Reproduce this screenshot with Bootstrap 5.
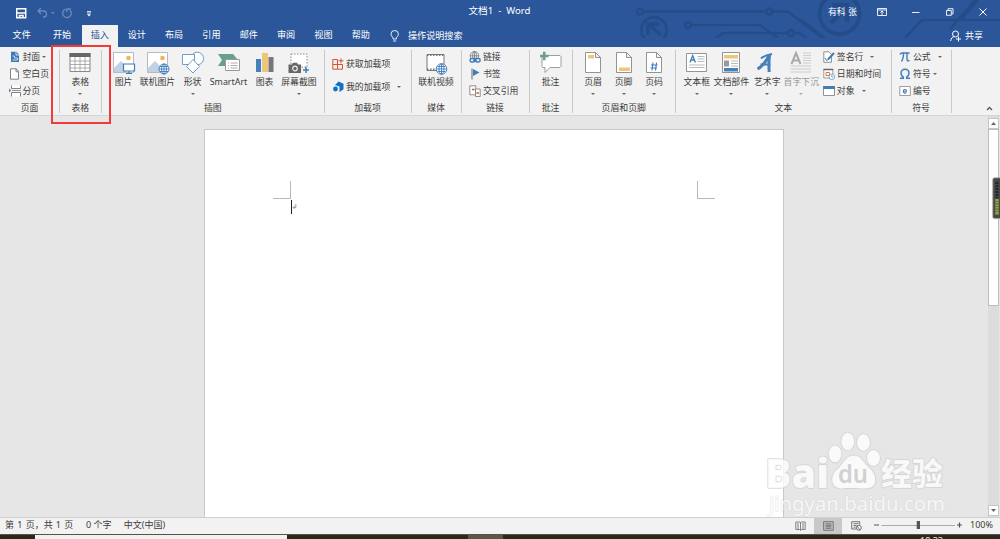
<!DOCTYPE html>
<html lang="zh-CN">
<head>
<meta charset="utf-8">
<meta name="viewport" content="width=device-width, initial-scale=1">
<title>文档1 - Word</title>
<link href="https://cdn.jsdelivr.net/npm/bootstrap@5.3.0/dist/css/bootstrap.min.css" rel="stylesheet">
<style>
  :root { --blue:#2b579a; --ink:#3c3c3c; --line:#c9c9c9; }
  body { font-family:"Noto Sans","Noto Sans CJK SC",sans-serif; font-size:8.9px; line-height:14px; color:var(--ink); background:#e6e6e6; width:1000px; height:539px; }
  svg { display:block; flex:none; }
  svg:not([fill]) { fill:none; }
  .titlebar { height:47px; background:var(--blue); color:#fff; }
  .art { left:630px; top:0; }
  .caption-row { height:25px; }
  .quick { width:450px; padding-left:16px; }
  .doc-name { width:99px; font-size:9.6px; padding-bottom:3px; text-align:center; }
  .win { padding-left:279px; padding-bottom:2px; }
  .win-buttons { margin-left:19px; }
  .tabs-row { height:22px; }
  .tab { width:37.35px; height:22px; line-height:20px; text-align:center; color:#fff; text-decoration:none; font-size:9.1px; }
  .tab-file { width:43.4px; }
  .tab.active { background:#f2f2f2; color:var(--blue); width:36px; margin:0 .35px 0 1px; }
  .tell { margin-left:10px; margin-bottom:1px; gap:5.500px; font-size:9.1px; }
  .share { margin-right:17px; margin-bottom:1px; font-size:9px; }
  .ribbon { height:69px; background:#f2f2f2; border-bottom:1px solid #d6d6d6; }
  .grp { height:69px; padding-top:4px; }
  .grp::after { content:""; position:absolute; right:-.5px; top:3px; height:63px; width:1px; background:var(--line); }
  .grp-body { height:50px; }
  .big { height:50px; padding:0; border:0; background:none; color:inherit; }
  .big .cap { height:14px; white-space:nowrap; }
  .arrow { width:0; height:0; border:2px solid transparent; border-top:2.4px solid #666; border-bottom:0; flex:none; }
  .big .arrow { margin-top:4px; }
  .small-row { height:16.8px; gap:2px; white-space:nowrap; }
  .small-row .arrow { margin-left:5px; }
  .small-row .arrow-near { margin-left:0; }
  .stack { padding-top:.01px; }
  .grp-body { display:flow-root; }
  .stack .small-row:first-child { margin-top:-2px; }
  .g1 { width:59px; } .g1 .stack { padding-left:8.500px; }
  .g2 { width:42.5px; } .g3 { width:222.5px; } .g4 { width:87px; } .g5 { width:50px; }
  .g6 { width:68px; } .g7 { width:43px; } .g8 { width:103.5px; } .g9 { width:215.5px; } .g10 { width:60px; }
  .cols { display:grid; }
  .g3 .cols { grid-template-columns:22px 46px 24px 48px 24px 45px; padding-left:11px; }
  .g8 .cols { grid-template-columns:30px 31px 30px; padding-left:6px; }
  .g9 .cols { grid-template-columns:33px 36px 36px 32px 70px; padding-left:4.8px; }
  .g9 .stack { padding-left:5.500px; }
  .g4 .small-row { height:23px; }
  .g4 .stack { padding:3px 0 0 8px; }
  .work { height:401px; }
  .paper { width:580px; height:388px; margin:13px 0 0 204px; background:#fff; border:1px solid #c8c8c8; border-bottom:0; padding:51px 69px 0; }
  .corner { width:18px; height:18px; border-bottom:1px solid #b8b8b8; }
  .corner-l { border-right:1px solid #b8b8b8; margin-left:-1px; } .corner-r { border-left:1px solid #b8b8b8; margin-right:-1px; }
  .caret-line { margin-left:16px; margin-top:1px; }
  .vscroll { width:11px; margin-left:204px; padding:2px 0 1px; background:#dcdcdc; }
  .sbtn { width:11px; height:11px; background:#fff; border:1px solid #c6c6c6; }
  .thumb { width:11px; height:177px; background:#fff; border:1px solid #bdbdbd; }
  .gauge { right:0; top:61px; }
  .collapse-mark { margin-right:6px; }
  .status { height:17px; border-top:1px solid #d0d0d0; background:#f2f2f2; font-size:9px; }
  .status > span { height:16px; line-height:14px; }
  .status .pg { width:81px; padding-left:5px; word-spacing:.9px; } .status .wc { width:39px; padding-left:5px; }
  .status .lg { width:667px; }
  .status .pct { margin-right:7px; }
  .viewbtn { width:28px; height:16px; }
  .viewbtn.on { background:#c8c8c8; }
  .zoomer { margin-left:2px; margin-bottom:2px; }
  .taskbar { height:5px; background:#2b271b; border-top:1px solid #56534a; box-sizing:content-box; }
  .task-search { width:252px; margin-left:35px; background:#f1f1f1; margin-top:-1px; height:6px; border-top:1px solid #ccc; }
  .task-app { width:35px; margin-left:181px; background:#59574c; }
  .clock { margin-left:417px; color:#eee; font-size:9px; line-height:12px; }
  .redbox { left:51px; top:45px; width:60px; height:79px; border:2px solid #f13a3a; }
  .wm { left:760px; top:425px; }
</style>
</head>
<body class="overflow-hidden position-relative">
<header class="titlebar position-relative">
  <svg class="art position-absolute" width="370" height="38" stroke="#244c89" stroke-width="2.4">
    <circle cx="10" cy="11.500" r="3"/><path d="M13 11.500h123M143 11.500h15l34 26"/><circle cx="139.500" cy="11.500" r="3"/>
    <circle cx="58" cy="25" r="3"/><path d="M61 25h69l18 13M86 38l7-5h65M164 33h5l8 5"/><circle cx="161" cy="33" r="3"/>
    <path d="M15 39a12.700 12.700 0 1 1 18 0" stroke-width="3"/><path d="M31 35 18 24M18 35V24h11" stroke-width="3.600"/>
    <circle cx="209.500" cy="14" r="20" stroke-width="4"/><path d="m201 23 16-17M202 5h15v17" stroke-width="4.500"/>
    <path d="m170 19 25 19M275 38l17-18h78M320 29 345 0M331 20 348 0" stroke-width="2.500"/>
  </svg>
  <div class="caption-row d-flex align-items-center position-relative">
    <div class="quick d-flex align-items-center">
      <svg width="80" height="14" viewBox="0 0 80 14"><path d="M.7 2.700h9v9H.7zM1 7h8.500M3.500 11.500V9.500h3.500v2" stroke="#fff" stroke-width="1.500"/><g stroke="#6b8abc" stroke-width="1.300"><path d="m25 2-3 3 3 3M22 5h5.500a3 3 0 0 1 0 6H27"/><path d="M49.500 3.200a4.300 4.300 0 1 0 4.500 1M50.800 6.300V3h4"/></g><path d="m35 6 1.800 2 1.800-2z" fill="#6b8abc"/><path d="M71 5.500h4M71 7h4" stroke="#fff" stroke-width=".8"/><path d="m71 8.200 2 2.300 2-2.300z" fill="#fff"/></svg>
    </div>
    <div class="doc-name">文档1 &nbsp;- &nbsp;Word</div>
    <div class="win d-flex align-items-center">
      <span>有科 张</span>
      <svg class="win-buttons" width="112" height="14" viewBox="876 4 112 14" stroke="#fff"><path d="M877.500 7.500h9v7h-9zM877.500 9h9M882 14v-4m-1.600 1.600L882 10l1.600 1.600" stroke-width=".9"/><path d="M912 11.500h7.500M946.500 9.500h4.800v4.800h-4.800zM948 9.300V7.700h5v5.200h-1.500" stroke-width=".9"/><path d="m979.500 7.500 7 7m0-7-7 7"/></svg>
    </div>
  </div>
  <nav class="tabs-row d-flex align-items-center position-relative">
    <a class="tab tab-file">文件</a><a class="tab">开始</a><a class="tab active">插入</a><a class="tab">设计</a><a class="tab">布局</a><a class="tab">引用</a><a class="tab">邮件</a><a class="tab">审阅</a><a class="tab">视图</a><a class="tab">帮助</a>
    <div class="tell d-flex align-items-center"><svg width="13" height="14" viewBox="1 0 13 14" stroke="#fff" stroke-width=".9"><path d="M5 10V8.500C3.800 7.500 3 6.600 3 5.200a3.700 3.700 0 0 1 7.400 0c0 1.400-.8 2.300-2 3.300V10zM5.200 12h3"/></svg><span>操作说明搜索</span></div>
    <div class="share ms-auto d-flex align-items-center gap-1"><svg width="11" height="12" viewBox="0 0 11 12" stroke="#fff"><circle cx="5.500" cy="4" r="3"/><path d="M.7 11c.3-3 1.800-4 3.500-4.500M6 9h5M8.500 6.500v5"/></svg><span>共享</span></div>
  </nav>
</header>

<main class="ribbon d-flex position-relative">
  <section class="grp g1 position-relative">
    <div class="grp-body"><div class="stack">
      <div class="small-row d-flex align-items-center"><svg width="12" height="12" viewBox="0 0 12 12"><path d="M2 .8h5.500L10 3.500V11H2z" fill="#3d78b4"/><path d="M7 1v3h3" stroke="#d5e3f0"/><path d="M3.500 5h2v2h3v2h-5" stroke="#c6d9eb"/></svg><span>封面</span><i class="arrow arrow-near"></i></div>
      <div class="small-row d-flex align-items-center"><svg width="12" height="12" viewBox="0 0 12 12"><path d="M1.500.8h5.800L9.500 3.500v7.700h-8zM7 .8v3h2.500" fill="#fff" stroke="#777" stroke-width=".9"/></svg><span>空白页</span></div>
      <div class="small-row d-flex align-items-center"><svg width="12" height="12" viewBox="0 0 12 12"><path d="M2.500.5v3h9v-3M2.500 11.500v-4h9v4" fill="#fff" stroke="#777" stroke-width=".9"/><path d="M3 5.500h9" stroke="#999"/><path d="m0 3.500 2 2-2 2z" fill="#3f7cbb"/></svg><span>分页</span></div>
    </div></div>
    <div class="grp-name text-center">页面</div>
  </section>

  <section class="grp g2 position-relative">
    <div class="grp-body"><button class="big w-100 d-flex flex-column align-items-center"><svg width="24" height="24" viewBox="0 0 24 24"><path d="M2 2.500h20v18H2z" fill="#fff" stroke="#888"/><path d="M1.500 2h21v4h-21z" fill="#666"/><path d="M2 10h20M2 13.500h20M2 17h20M7 6v14.500M12 6v14.500M17 6v14.500" stroke="#999" stroke-width=".8"/></svg><span class="cap">表格</span><i class="arrow"></i></button></div>
    <div class="grp-name text-center">表格</div>
  </section>

  <section class="grp g3 position-relative">
    <div class="grp-body cols">
      <button class="big d-flex flex-column align-items-center"><svg width="24" height="24" viewBox="0 0 24 24"><path d="M1.500 1.500h20v20h-20z" fill="#fff" stroke="#aaa" stroke-width=".8"/><path d="M2 21v-4l7-7 6 6v5z" fill="#bfd2e4"/><circle cx="16.500" cy="7" r="2.300" fill="#eeb750"/><path d="M11.500 13h11v7h-11zM17 20v2.500M14 22.500h6" fill="#fff" stroke="#3f7cbb" stroke-width="1.200"/></svg><span class="cap">图片</span></button>
      <button class="big d-flex flex-column align-items-center"><svg width="24" height="24" viewBox="0 0 24 24"><path d="M1.500 1.500h20v20h-20z" fill="#fff" stroke="#aaa" stroke-width=".8"/><path d="M2 21v-4l7-7 6 6v5z" fill="#bfd2e4"/><circle cx="16.500" cy="7" r="2.300" fill="#eeb750"/><g stroke="#3f7cbb" stroke-width=".9"><circle cx="18" cy="18" r="5" fill="#fff"/><ellipse cx="18" cy="18" rx="2.400" ry="5"/><path d="M18 13v10M13 18h10M14 15.500h8M14 20.500h8"/></g></svg><span class="cap">联机图片</span></button>
      <button class="big d-flex flex-column align-items-center"><svg width="24" height="24" viewBox="0 0 24 24" fill="#fff" stroke="#6f9fce"><circle cx="16.300" cy="7.500" r="6.300"/><path d="M1.500 3.500h12v10h-12z"/><path d="m12 8.500 6.500 7L12 22l-6.500-6.500z"/></svg><span class="cap">形状</span><i class="arrow"></i></button>
      <button class="big d-flex flex-column align-items-center"><svg width="24" height="24" viewBox="0 0 24 24"><path d="M1 3h15l5 6-5 6H1l4-6z" fill="#6aa08b"/><path d="M8.500 8.500h14v11h-14z" fill="#fff" stroke="#999"/><path d="M11 12h1m1.500 0h7M11 14.500h1m1.500 0h7M11 17h1m1.500 0h7" stroke="#aaa"/></svg><span class="cap">SmartArt</span></button>
      <button class="big d-flex flex-column align-items-center"><svg width="24" height="24" viewBox="0 0 24 24"><path d="M3 8h5v13H3z" fill="#4580bb"/><path d="M9 2h6v19H9z" fill="#edc779"/><path d="M15.500 6h5v15h-5z" fill="#777"/></svg><span class="cap">图表</span></button>
      <button class="big d-flex flex-column align-items-center"><svg width="24" height="24" viewBox="0 0 24 24"><path d="M4 3h16v13H4z" fill="#fff" stroke="#888" stroke-dasharray="1.500 1.500"/><path d="M1.500 13.500h3.500l1-1.800h4l1 1.800h3V22H1.500z" fill="#666"/><circle cx="8" cy="17.500" r="2.300" stroke="#eee" stroke-width="1.200"/><path d="M16 19h6M19 16v6" stroke="#3f7cbb" stroke-width="1.500"/></svg><span class="cap">屏幕截图</span><i class="arrow"></i></button>
    </div>
    <div class="grp-name text-center">插图</div>
  </section>

  <section class="grp g4 position-relative">
    <div class="grp-body"><div class="stack">
      <div class="small-row d-flex align-items-center"><svg width="12" height="12" viewBox="0 0 12 12" stroke="#d9532c"><path d="M.8 1.500h4.700v9.700H.8zM.8 6.500h9.700v4.700H5.500M9 .3v5M6.500 2.800h5"/></svg><span>获取加载项</span></div>
      <div class="small-row d-flex align-items-center"><svg width="12" height="12" viewBox="0 0 12 12" fill="#0b72c5"><path d="m6.500.5 5 2.200v5.500L7.500 11V5.500L3 4z"/><circle cx="3.500" cy="8" r="2.400"/></svg><span>我的加载项</span><i class="arrow"></i></div>
    </div></div>
    <div class="grp-name text-center">加载项</div>
  </section>

  <section class="grp g5 position-relative">
    <div class="grp-body"><button class="big w-100 d-flex flex-column align-items-center"><svg width="24" height="24" viewBox="0 0 24 24"><path d="M3 3.500h17v16H3z" fill="#fff" stroke="#777"/><path d="M3 4h17M3 18.500h10" stroke="#777" stroke-width="2.200" stroke-dasharray="1.500 1.500"/><g stroke="#3f7cbb" stroke-width=".9"><circle cx="17.500" cy="18" r="5.300" fill="#fff"/><ellipse cx="17.500" cy="18" rx="2.500" ry="5.300"/><path d="M17.500 13v10M12.500 18h10M13.500 15.500h8M13.500 20.500h8"/></g></svg><span class="cap">联机视频</span></button></div>
    <div class="grp-name text-center">媒体</div>
  </section>

  <section class="grp g6 position-relative">
    <div class="grp-body"><div class="stack ps-2">
      <div class="small-row d-flex align-items-center"><svg width="12" height="12" viewBox="0 0 12 12"><g stroke="#777" stroke-width=".8"><circle cx="5.500" cy="4.800" r="4.300"/><ellipse cx="5.500" cy="4.800" rx="2" ry="4.300"/><path d="M1 4.800h9M5.500.5V8"/></g><g fill="#f2f2f2" stroke="#3f7cbb" stroke-width="1.400"><rect x="1" y="7.500" width="5" height="3.500" rx="1.700"/><rect x="6.200" y="7.500" width="5" height="3.500" rx="1.700"/><path d="M4 9.200h4"/></g></svg><span>链接</span></div>
      <div class="small-row d-flex align-items-center"><svg width="12" height="12" viewBox="0 0 12 12"><path d="M3 .5v11" stroke="#666"/><path d="m4 1 6.500 3.500L4 8z" fill="#3f7cbb"/></svg><span>书签</span></div>
      <div class="small-row d-flex align-items-center"><svg width="12" height="12" viewBox="0 0 12 12"><path d="M.8.8h6v9h-6z" fill="#fff" stroke="#777" stroke-width=".8"/><path d="M6.500 4h4.700v7.500H6.500z" fill="#fff" stroke="#777" stroke-width=".8"/><path d="M3 4.500h2.500M7.500 8H10" stroke="#d9532c" stroke-width="1.300"/></svg><span>交叉引用</span></div>
    </div></div>
    <div class="grp-name text-center">链接</div>
  </section>

  <section class="grp g7 position-relative">
    <div class="grp-body"><button class="big w-100 d-flex flex-column align-items-center"><svg width="24" height="24" viewBox="0 0 24 24"><path d="M4 4.500h17l1 1v10l-1 1H11l-5 5v-5H3.500l-.5-1V6z" fill="#fff" stroke="#888" stroke-width=".8"/><path d="M1 5h8.500M5.200.8v8.500" stroke="#6aa08b" stroke-width="2.600"/></svg><span class="cap">批注</span></button></div>
    <div class="grp-name text-center">批注</div>
  </section>

  <section class="grp g8 position-relative">
    <div class="grp-body cols">
      <button class="big d-flex flex-column align-items-center"><svg width="24" height="24" viewBox="0 0 24 24"><path d="M4.500 1.500h10l5 5v15h-15zM14.500 1.500v5h5" fill="#fff" stroke="#888" stroke-width=".9"/><path d="M7 4h6v3.500H7z" fill="#edc779"/></svg><span class="cap">页眉</span><i class="arrow"></i></button>
      <button class="big d-flex flex-column align-items-center"><svg width="24" height="24" viewBox="0 0 24 24"><path d="M4.500 1.500h10l5 5v15h-15zM14.500 1.500v5h5" fill="#fff" stroke="#888" stroke-width=".9"/><path d="M7 16.500h11v3.500H7z" fill="#edc779"/></svg><span class="cap">页脚</span><i class="arrow"></i></button>
      <button class="big d-flex flex-column align-items-center"><svg width="24" height="24" viewBox="0 0 24 24"><path d="M4.500 1.500h10l5 5v15h-15zM14.500 1.500v5h5" fill="#fff" stroke="#888" stroke-width=".9"/><path d="m11 11.500-1 8m4.500-8-1 8M9 14h6.500M8.500 17H15" stroke="#3f7cbb" stroke-width="1.100"/></svg><span class="cap">页码</span><i class="arrow"></i></button>
    </div>
    <div class="grp-name text-center">页眉和页脚</div>
  </section>

  <section class="grp g9 position-relative">
    <div class="grp-body cols">
      <button class="big d-flex flex-column align-items-center"><svg width="24" height="24" viewBox="0 0 24 24"><path d="M1.500 2.500h20v18h-20z" fill="#fff" stroke="#888" stroke-width=".9"/><path d="m5 11.500 2.700-7 2.700 7M6 9h3.500" stroke="#3f7cbb" stroke-width="1.300"/><path d="M12.500 5.500h7m-7 2.500h7m-7 2.500h7M4 14h15.500M4 16.500h15.500" stroke="#bbb"/></svg><span class="cap">文本框</span><i class="arrow"></i></button>
      <button class="big d-flex flex-column align-items-center"><svg width="24" height="24" viewBox="0 0 24 24"><path d="M3.500 1.500h17v20h-17z" fill="#fff" stroke="#888" stroke-width=".9"/><path d="M5 4h14v3.500H5z" fill="#edc779"/><path d="M5 9.500h5v6H5z" fill="#999"/><path d="M12 10h7m-7 2.500h7M12 15h7" stroke="#bbb"/><path d="M5 17h14v3.500H5z" fill="#4580bb"/></svg><span class="cap">文档部件</span><i class="arrow"></i></button>
      <button class="big d-flex flex-column align-items-center"><svg width="24" height="24" viewBox="0 0 24 24" stroke="#4580bb"><path d="M2.500 18C7.500 15.500 11.500 9.500 14.500 4c-.6 5.500-.8 11-.3 17" stroke-width="3"/><path d="M6 7.500C8.500 5 12 4 17 3M5.500 13.500h10" stroke-width="2"/></svg><span class="cap">艺术字</span><i class="arrow"></i></button>
      <button class="big d-flex flex-column align-items-center opacity-50"><svg width="24" height="24" viewBox="0 0 24 24"><path d="m2.500 13 4.500-11 4.500 11M4 9.500h6" stroke="#666" stroke-width="2"/><path d="M14 2h8m-8 2.500h8M14 7h8m-8 2.500h8M14 12h8M1.500 15h20.500M1.500 18h20.500M1.500 21h20.500" stroke="#aaa"/></svg><span class="cap">首字下沉</span><i class="arrow"></i></button>
      <div class="stack">
        <div class="small-row d-flex align-items-center"><svg width="12" height="12" viewBox="0 0 12 12"><path d="M.8.8H6L8.500 3.500v7.800H.8z" fill="#fff" stroke="#777" stroke-width=".8"/><path d="m5 8.500 6-6.500" stroke="#3f7cbb" stroke-width="2"/><path d="m2 7 1.500 2.500 2-1" stroke="#3f7cbb"/></svg><span>签名行</span><i class="arrow"></i></div>
        <div class="small-row d-flex align-items-center"><svg width="12" height="12" viewBox="0 0 12 12"><path d="M.8 1.500h9v8.500h-9z" fill="#fff" stroke="#888" stroke-width=".8"/><path d="M.5 1.500h9.700" stroke="#666" stroke-width="1.500"/><path d="M3 4.500h3.500v3H3z" stroke="#d8763b"/><circle cx="8.800" cy="8.800" r="2.800" fill="#fff" stroke="#6f9fce" stroke-width=".9"/><path d="M8.800 7v2h1.500" stroke="#777" stroke-width=".7"/></svg><span>日期和时间</span></div>
        <div class="small-row d-flex align-items-center"><svg width="12" height="12" viewBox="0 0 12 12"><path d="M.5 1.500h11v9H.5z" fill="#fff" stroke="#777" stroke-width=".8"/><path d="M.2 1h11.600v3H.2z" fill="#3f7cbb"/></svg><span>对象</span><i class="arrow"></i></div>
      </div>
    </div>
    <div class="grp-name text-center">文本</div>
  </section>

  <section class="grp g10 position-relative">
    <div class="grp-body"><div class="stack ps-2">
      <div class="small-row d-flex align-items-center"><svg width="12" height="12" viewBox="0 0 12 12" stroke="#3f7cbb" stroke-width="1.400"><path d="M1 3.300C1.700 2 2.200 2 3 2h7.500M4.500 2c0 3-.2 6-2 8.500M8 2c0 3-.4 8 .8 8 .8 0 1.200-.4 1.500-1"/></svg><span>公式</span><i class="arrow"></i></div>
      <div class="small-row d-flex align-items-center"><svg width="12" height="12" viewBox="0 0 12 12" stroke="#3f7cbb" stroke-width="1.500"><path d="M1 10.300h3.300V9C2.800 8 2 6.700 2 5.200a4 4 0 0 1 8 0C10 6.700 9.200 8 7.700 9v1.300H11"/></svg><span>符号</span><i class="arrow arrow-near"></i></div>
      <div class="small-row d-flex align-items-center"><svg width="12" height="12" viewBox="0 0 12 12"><path d="M.8 1.500h10.500v9H.8z" fill="#fff" stroke="#888" stroke-width=".8"/><path d="M4.500 6.200h3C7.500 4 4.300 4 4.300 6.300c0 2.200 2.500 2.200 3.200 1.200" stroke="#3f7cbb" stroke-width="1.100"/></svg><span>编号</span></div>
    </div></div>
    <div class="grp-name text-center">符号</div>
  </section>
  <svg class="collapse-mark ms-auto align-self-end mb-1" width="9" height="6" viewBox="0 0 9 6" stroke="#555" stroke-width="1.300"><path d="m2 5 2.500-2.500L7 5"/></svg>
</main>
<div class="redbox position-absolute"></div>

<div class="work d-flex position-relative">
  <article class="paper">
    <div class="d-flex justify-content-between"><div class="corner corner-l"></div><div class="corner corner-r"></div></div>
    <svg class="caret-line" width="9" height="15" viewBox="0 0 9 15"><path d="M1.500 0v14" stroke="#222"/><path d="M5.800 4v3.500H3.200m1.500-1.500L3.200 7.500l1.500 1.500" stroke="#888" stroke-width=".8"/></svg>
  </article>
  <aside class="vscroll d-flex flex-column">
    <div class="sbtn"><svg width="9" height="9"><path d="m2 6 2.500-3L7 6z" fill="#666"/></svg></div>
    <div class="thumb"></div>
    <div class="sbtn mt-auto"><svg width="9" height="9"><path d="m2 3 2.500 3L7 3z" fill="#666"/></svg></div>
  </aside>
  <svg class="gauge position-absolute" width="8" height="43" viewBox="0 0 8 43"><rect x=".7" y=".7" width="12" height="41" rx="2" fill="#45494b" stroke="#bdb5a8" stroke-width="1"/><path d="M5 5v16" stroke="#20272b" stroke-width="3" stroke-dasharray="2 1"/><path d="M5 22v16" stroke="#91a83f" stroke-width="3.500" stroke-dasharray="2 .6"/></svg>
</div>

<footer class="status d-flex align-items-center">
  <span class="pg text-nowrap">第 1 页，共 1 页</span><span class="wc text-nowrap">0 个字</span><span class="lg ps-1">中文(中国)</span>
  <div class="d-flex">
    <div class="viewbtn d-flex align-items-center justify-content-center"><svg width="11" height="10" viewBox="0 0 11 10" stroke="#666" stroke-width=".8"><path d="M5.500 1.500v8M5.500 1.500 4.500 1H.8v7.500h3.700l1 .8 1-.8h3.700V1H6.500zM2 3h2M2 5h2M2 7h2M7 3h2M7 5h2M7 7h2"/></svg></div>
    <div class="viewbtn on d-flex align-items-center justify-content-center"><svg width="11" height="10" viewBox="0 0 11 10" stroke="#666" stroke-width=".9"><path d="M.7.7h9.500v8.600H.7zM2.500 2.800h6M2.500 4.300h6M2.500 5.800h6M2.500 7.300h6"/></svg></div>
    <div class="viewbtn d-flex align-items-center justify-content-center"><svg width="11" height="10" viewBox="0 0 11 10" stroke="#666" stroke-width=".9"><path d="M5 8H.7V.7h8v3M2.500 2.700h5M2.500 4.500h3M2.500 6.200h2"/><circle cx="7.800" cy="6.800" r="2.500"/><path d="m6 5 3 4"/></svg></div>
  </div>
  <svg class="zoomer" width="98" height="12" viewBox="872 519 98 12"><path d="M874 525h5M957 525h5m-2.500-2.500v5" stroke="#555" stroke-width="1.200"/><path d="M881.500 525.500H955" stroke="#aaa"/><path d="M916.700 521h3.300v8h-3.300z" fill="#555"/></svg>
  <span class="pct ms-auto">100%</span>
</footer>
<div class="taskbar d-flex overflow-hidden"><div class="task-search"></div><div class="task-app"></div><div class="clock">18:33</div></div>

<svg class="wm position-absolute" width="200" height="100" viewBox="760 425 200 100">
  <g fill="#fff" fill-opacity=".78" stroke="#c9c9c9" stroke-opacity=".65" stroke-width="1.600" stroke-linejoin="round" paint-order="stroke" font-family="'Noto Sans','Noto Sans CJK SC',sans-serif">
    <text x="765" y="488" font-family="'Open Sans','Noto Sans',sans-serif" font-size="41" font-weight="800" textLength="64" lengthAdjust="spacingAndGlyphs">Bai</text>
    <ellipse cx="835" cy="454" rx="6.500" ry="8.500"/><ellipse cx="847.800" cy="441.500" rx="6.500" ry="9"/><ellipse cx="863.500" cy="442.500" rx="6.500" ry="8.500"/><ellipse cx="873.500" cy="458" rx="6.500" ry="8"/>
    <path d="M854 455.500c8 0 9 7 15 12 8 6 10 21-3 21-6 0-17-1-23 0-12 1-14-12-6-19 7-6 8-14 17-14z"/>
    <text x="881" y="485" font-size="31" font-weight="900" textLength="62" lengthAdjust="spacingAndGlyphs">经验</text>
    <text x="769" y="511" font-size="19.500" stroke-width="1" stroke-opacity=".45" textLength="176" lengthAdjust="spacingAndGlyphs">jingyan.baidu.com</text>
  </g>
  <text x="838" y="483" font-family="'Noto Sans',sans-serif" font-size="25" font-weight="600" fill="#d1d1d1" textLength="30" lengthAdjust="spacingAndGlyphs">du</text>
</svg>
<script src="https://cdn.jsdelivr.net/npm/bootstrap@5.3.0/dist/js/bootstrap.bundle.min.js"></script>
</body>
</html>
